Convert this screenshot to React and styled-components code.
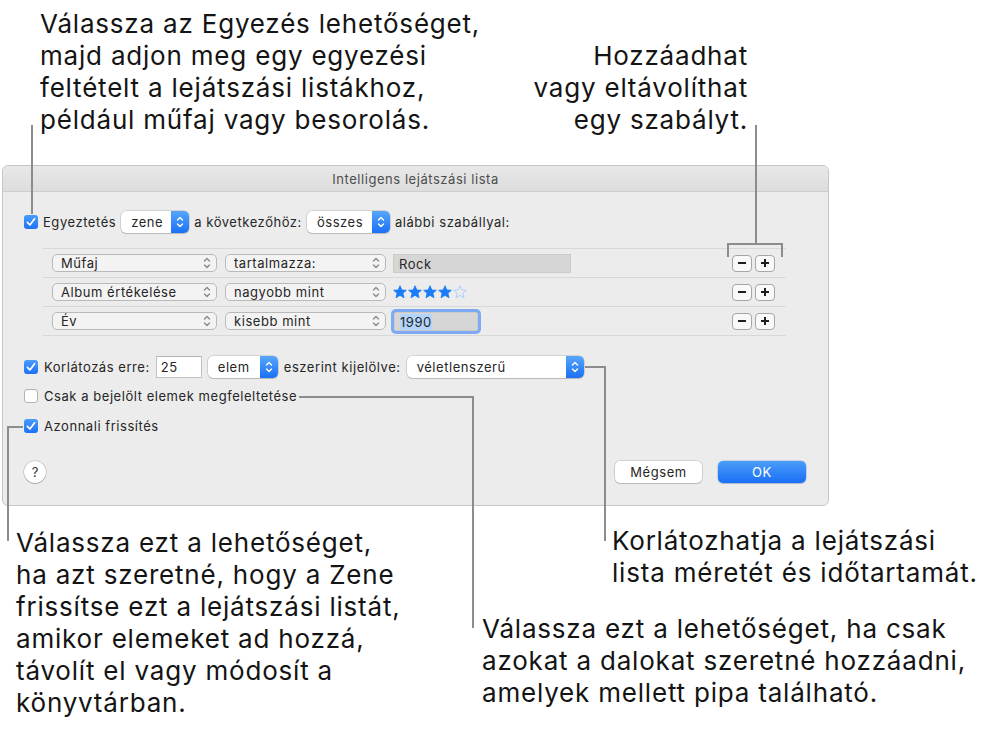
import styled, { createGlobalStyle } from 'styled-components';

const GlobalStyle = createGlobalStyle`
  html, body {
    margin: 0;
    padding: 0;
    background: #ffffff;
  }
  body {
    font-family: Inter, "Noto Sans", sans-serif;
  }
`;

const Canvas = styled.div`
  position: relative;
  width: 992px;
  height: 729px;
  overflow: hidden;
  background: #ffffff;
`;

// ---- callout texts ----

const TopNotes = styled.div`
  display: flex;
  justify-content: space-between;
  height: 165px;
`;

const Note = styled.p`
  margin: 0;
  font-family: Inter, "Noto Sans", sans-serif;
  font-size: 26px;
  line-height: 32px;
  letter-spacing: 0.8px;
  color: #141414;
  white-space: nowrap;
  text-align: ${p => p.$align || 'left'};
  margin-top: ${p => p.$top || 0}px;
  margin-left: ${p => p.$left || 0}px;
  margin-right: ${p => p.$right || 0}px;
`;

const BottomNotes = styled.div`
  display: flex;
`;

const NoteColumn = styled.div`
  display: flex;
  flex-direction: column;
  width: ${p => p.$w ? `${p.$w}px` : 'auto'};
`;

// ---- dialog window ----

const Window = styled.div`
  margin-left: 2px;
  width: 827px;
  height: 341px;
  box-sizing: border-box;
  border: 1px solid #c6c6c6;
  border-radius: 6px;
  background: #ececec;
  overflow: hidden;
  display: flex;
  flex-direction: column;
  font-family: Inter, "Noto Sans", sans-serif;
  font-size: 13px;
  letter-spacing: 0.55px;
  color: #262626;
`;

const TitleBar = styled.div`
  height: 25px;
  flex-shrink: 0;
  border-bottom: 1px solid #cdcdcd;
  background: linear-gradient(#e8e8e8, #dddddd);
  display: flex;
  align-items: center;
  justify-content: center;
  color: #4e4e4e;
  font-size: 13px;
`;

const Body = styled.div`
  display: flex;
  flex-direction: column;
  padding: 0 22px 0 21px;
`;

const Row = styled.div`
  display: flex;
  align-items: center;
  height: 22px;
  margin-top: ${p => p.$top || 0}px;
  gap: ${p => p.$gap ?? 6}px;
`;

const Label = styled.span`
  white-space: nowrap;
`;

const Check = styled.span`
  width: 14px;
  height: 14px;
  flex-shrink: 0;
  box-sizing: border-box;
  border-radius: 3px;
  background: ${p => (p.$on ? 'linear-gradient(#4a9df9, #1d71f5)' : '#ffffff')};
  border: ${p => (p.$on ? 'none' : '1px solid #b4b4b4')};
  box-shadow: ${p => (p.$on ? 'none' : 'inset 0 1px 1px rgba(0,0,0,0.05)')};
  display: flex;
  align-items: center;
  justify-content: center;
`;

const PopUp = styled.div`
  display: flex;
  flex-shrink: 0;
  width: ${p => p.$w}px;
  height: 22px;
  border-radius: 5px;
  background: #ffffff;
  box-shadow: 0 0 0 0.5px rgba(0, 0, 0, 0.22), 0 1px 1px rgba(0, 0, 0, 0.12);
  overflow: hidden;
`;

const PopLabel = styled.span`
  flex: 1;
  padding-left: 10px;
  line-height: 22px;
  white-space: nowrap;
`;

const Stepper = styled.span`
  width: 18px;
  background: linear-gradient(#58a6fb, #1a70f5);
  display: flex;
  align-items: center;
  justify-content: center;
`;

const Field = styled.div`
  width: ${p => p.$w}px;
  height: 22px;
  box-sizing: border-box;
  background: #ffffff;
  border: 1px solid #c2c2c2;
  border-top-color: #b2b2b2;
  padding-left: 4px;
  line-height: 20px;
  flex-shrink: 0;
`;

// ---- rules ----

const Rules = styled.div`
  margin-top: 15px;
  margin-left: 19px;
  width: 743px;
  border-top: 1px solid #d8d8d8;
`;

const RuleRow = styled.div`
  display: flex;
  align-items: center;
  height: 28px;
  border-bottom: 1px solid #d8d8d8;
  padding: 0 11px 0 9px;
`;

const RulePop = styled.div`
  display: flex;
  align-items: center;
  width: ${p => p.$w}px;
  height: 18px;
  box-sizing: border-box;
  margin-right: ${p => p.$mr || 0}px;
  border: 1px solid #b9b9b9;
  border-radius: 5px;
  background: #f3f3f3;
  padding: 0 5px 0 8px;
  flex-shrink: 0;
`;

const RuleText = styled.span`
  flex: 1;
  white-space: nowrap;
`;

const ValueField = styled.div`
  width: ${p => p.$w}px;
  height: 19px;
  box-sizing: border-box;
  background: #d6d6d6;
  border: 1px solid #cbcbcb;
  padding-left: 5px;
  line-height: 18px;
  flex-shrink: 0;
  margin-left: ${p => p.$ml || 0}px;
  border-radius: ${p => (p.$focus ? '2px' : '0')};
  box-shadow: ${p => (p.$focus ? '0 0 0 3px #7eaaf3' : 'none')};
`;

const Selected = styled.span`
  background: #b2d4fd;
`;

const Stars = styled.div`
  display: flex;
  gap: 1px;
  flex-shrink: 0;
`;

const PlusMinus = styled.div`
  display: flex;
  gap: 3px;
  margin-left: auto;
`;

const SmallButton = styled.div`
  width: 20px;
  height: 17px;
  box-sizing: border-box;
  border: 1px solid #a6a6a6;
  border-radius: 4px;
  background: #f9f9f9;
  display: flex;
  align-items: center;
  justify-content: center;
`;

// ---- footer ----

const Footer = styled.div`
  display: flex;
  align-items: center;
  height: 22px;
  margin-top: 24px;
`;

const Help = styled.div`
  width: 22px;
  height: 22px;
  box-sizing: border-box;
  border-radius: 50%;
  background: #ffffff;
  box-shadow: 0 0 0 0.5px rgba(0, 0, 0, 0.25), 0 1px 1px rgba(0, 0, 0, 0.15);
  display: flex;
  align-items: center;
  justify-content: center;
  font-size: 13px;
  letter-spacing: 0;
  color: #333;
`;

const Button = styled.div`
  width: ${p => p.$w}px;
  height: 22px;
  margin-left: ${p => p.$ml || 0}px;
  border-radius: 5px;
  display: flex;
  align-items: center;
  justify-content: center;
  font-size: 13px;
  background: ${p => (p.$primary ? 'linear-gradient(#4b9df9, #1a6ff5)' : '#ffffff')};
  color: ${p => (p.$primary ? '#ffffff' : '#262626')};
  box-shadow: ${p =>
    p.$primary
      ? '0 0 0 0.5px rgba(0,60,200,0.3), 0 1px 1px rgba(0,0,0,0.12)'
      : '0 0 0 0.5px rgba(0,0,0,0.22), 0 1px 1px rgba(0,0,0,0.12)'};
`;

const Leaders = styled.svg`
  position: absolute;
  left: 0;
  top: 0;
  pointer-events: none;
`;

// ---- drawings ----

const CheckMark = () => (
  <svg width="14" height="14" viewBox="0 0 14 14">
    <path d="M3.4 7.4 L5.9 10 L10.6 3.8" fill="none" stroke="#fff" strokeWidth="1.7" strokeLinecap="round" strokeLinejoin="round" />
  </svg>
);

const Chevrons = ({ color = '#fff', w = 8 }) => (
  <svg width={w} height="14" viewBox="0 0 8 14">
    <path d="M1.5 5 L4 2.5 L6.5 5 M1.5 9 L4 11.5 L6.5 9" fill="none" stroke={color} strokeWidth="1.4" strokeLinecap="round" strokeLinejoin="round" />
  </svg>
);

const Star = ({ filled }) => (
  <svg width="14" height="14" viewBox="0 0 14 14">
    <polygon
      points="7,0.8 8.8,5 13.3,5.3 9.9,8.2 11,12.8 7,10.3 3,12.8 4.1,8.2 0.7,5.3 5.2,5"
      fill={filled ? '#1c7cf6' : 'none'}
      stroke={filled ? '#1c7cf6' : '#a9ccfb'}
      strokeWidth="0.9"
      strokeLinejoin="round"
    />
  </svg>
);

const Minus = () => (
  <svg width="10" height="10" viewBox="0 0 10 10">
    <path d="M1 5 H9" stroke="#1e1e1e" strokeWidth="2" />
  </svg>
);

const Plus = () => (
  <svg width="10" height="10" viewBox="0 0 10 10">
    <path d="M1 5 H9 M5 1 V9" stroke="#1e1e1e" strokeWidth="2" />
  </svg>
);

const Box = ({ on }) => <Check $on={on}>{on && <CheckMark />}</Check>;

const Select = ({ w, children }) => (
  <PopUp $w={w}>
    <PopLabel>{children}</PopLabel>
    <Stepper><Chevrons /></Stepper>
  </PopUp>
);

const RuleSelect = ({ w, mr, children }) => (
  <RulePop $w={w} $mr={mr}>
    <RuleText>{children}</RuleText>
    <Chevrons color="#8a8a8a" w={8} />
  </RulePop>
);

const AddRemove = () => (
  <PlusMinus>
    <SmallButton><Minus /></SmallButton>
    <SmallButton><Plus /></SmallButton>
  </PlusMinus>
);

const rules = [
  { field: 'Műfaj', op: 'tartalmazza:', kind: 'text', value: 'Rock' },
  { field: 'Album értékelése', op: 'nagyobb mint', kind: 'stars', value: 4 },
  { field: 'Év', op: 'kisebb mint', kind: 'focus', value: '1990' },
];

const leaderLines = [
  'M32 125 V214',
  'M756 125 V244',
  'M728 257 V244 H782 V257',
  'M585 367 H605 V541',
  'M299 397 H473 V628',
  'M23 427 H8 V541',
];

export default function App() {
  return (
    <Canvas>
      <GlobalStyle />
      <TopNotes>
        <Note $left={40} $top={8}>
          Válassza az Egyezés lehetőséget,<br />
          majd adjon meg egy egyezési<br />
          feltételt a lejátszási listákhoz,<br />
          például műfaj vagy besorolás.
        </Note>
        <Note $align="right" $right={244} $top={40}>
          Hozzáadhat<br />
          vagy eltávolíthat<br />
          egy szabályt.
        </Note>
      </TopNotes>

      <Window>
        <TitleBar>Intelligens lejátszási lista</TitleBar>
        <Body>
          <Row $top={19} $gap={5}>
            <Box on />
            <Label>Egyeztetés</Label>
            <Select w={68}>zene</Select>
            <Label>a következőhöz:</Label>
            <Select w={83}>összes</Select>
            <Label>alábbi szabállyal:</Label>
          </Row>

          <Rules>
            {rules.map(r => (
              <RuleRow key={r.field}>
                <RuleSelect w={165} mr={8}>{r.field}</RuleSelect>
                <RuleSelect w={161} mr={7}>{r.op}</RuleSelect>
                {r.kind === 'text' && <ValueField $w={178}>{r.value}</ValueField>}
                {r.kind === 'stars' && (
                  <Stars>
                    {[0, 1, 2, 3, 4].map(i => <Star key={i} filled={i < r.value} />)}
                  </Stars>
                )}
                {r.kind === 'focus' && (
                  <ValueField $w={84} $ml={1} $focus><Selected>{r.value}</Selected></ValueField>
                )}
                <AddRemove />
              </RuleRow>
            ))}
          </Rules>

          <Row $top={20} $gap={6}>
            <Box on />
            <Label>Korlátozás erre:</Label>
            <Field $w={46}>25</Field>
            <Select w={70}>elem</Select>
            <Label>eszerint kijelölve:</Label>
            <Select w={177}>véletlenszerű</Select>
          </Row>
          <Row $top={7}>
            <Box />
            <Label>Csak a bejelölt elemek megfeleltetése</Label>
          </Row>
          <Row $top={8}>
            <Box on />
            <Label>Azonnali frissítés</Label>
          </Row>

          <Footer>
            <Help>?</Help>
            <Button $w={87} $ml={569}>Mégsem</Button>
            <Button $w={88} $ml={16} $primary>OK</Button>
          </Footer>
        </Body>
      </Window>

      <BottomNotes>
        <NoteColumn $w={482}>
          <Note $left={16} $top={21}>
            Válassza ezt a lehetőséget,<br />
            ha azt szeretné, hogy a Zene<br />
            frissítse ezt a lejátszási listát,<br />
            amikor elemeket ad hozzá,<br />
            távolít el vagy módosít a<br />
            könyvtárban.
          </Note>
        </NoteColumn>
        <NoteColumn>
          <Note $left={130} $top={19}>
            Korlátozhatja a lejátszási<br />
            lista méretét és időtartamát.
          </Note>
          <Note $top={24}>
            Válassza ezt a lehetőséget, ha csak<br />
            azokat a dalokat szeretné hozzáadni,<br />
            amelyek mellett pipa található.
          </Note>
        </NoteColumn>
      </BottomNotes>

      <Leaders width="992" height="729" viewBox="0 0 992 729">
        {leaderLines.map(d => (
          <path key={d} d={d} fill="none" stroke="#8c8c8c" strokeWidth="2" />
        ))}
      </Leaders>
    </Canvas>
  );
}
